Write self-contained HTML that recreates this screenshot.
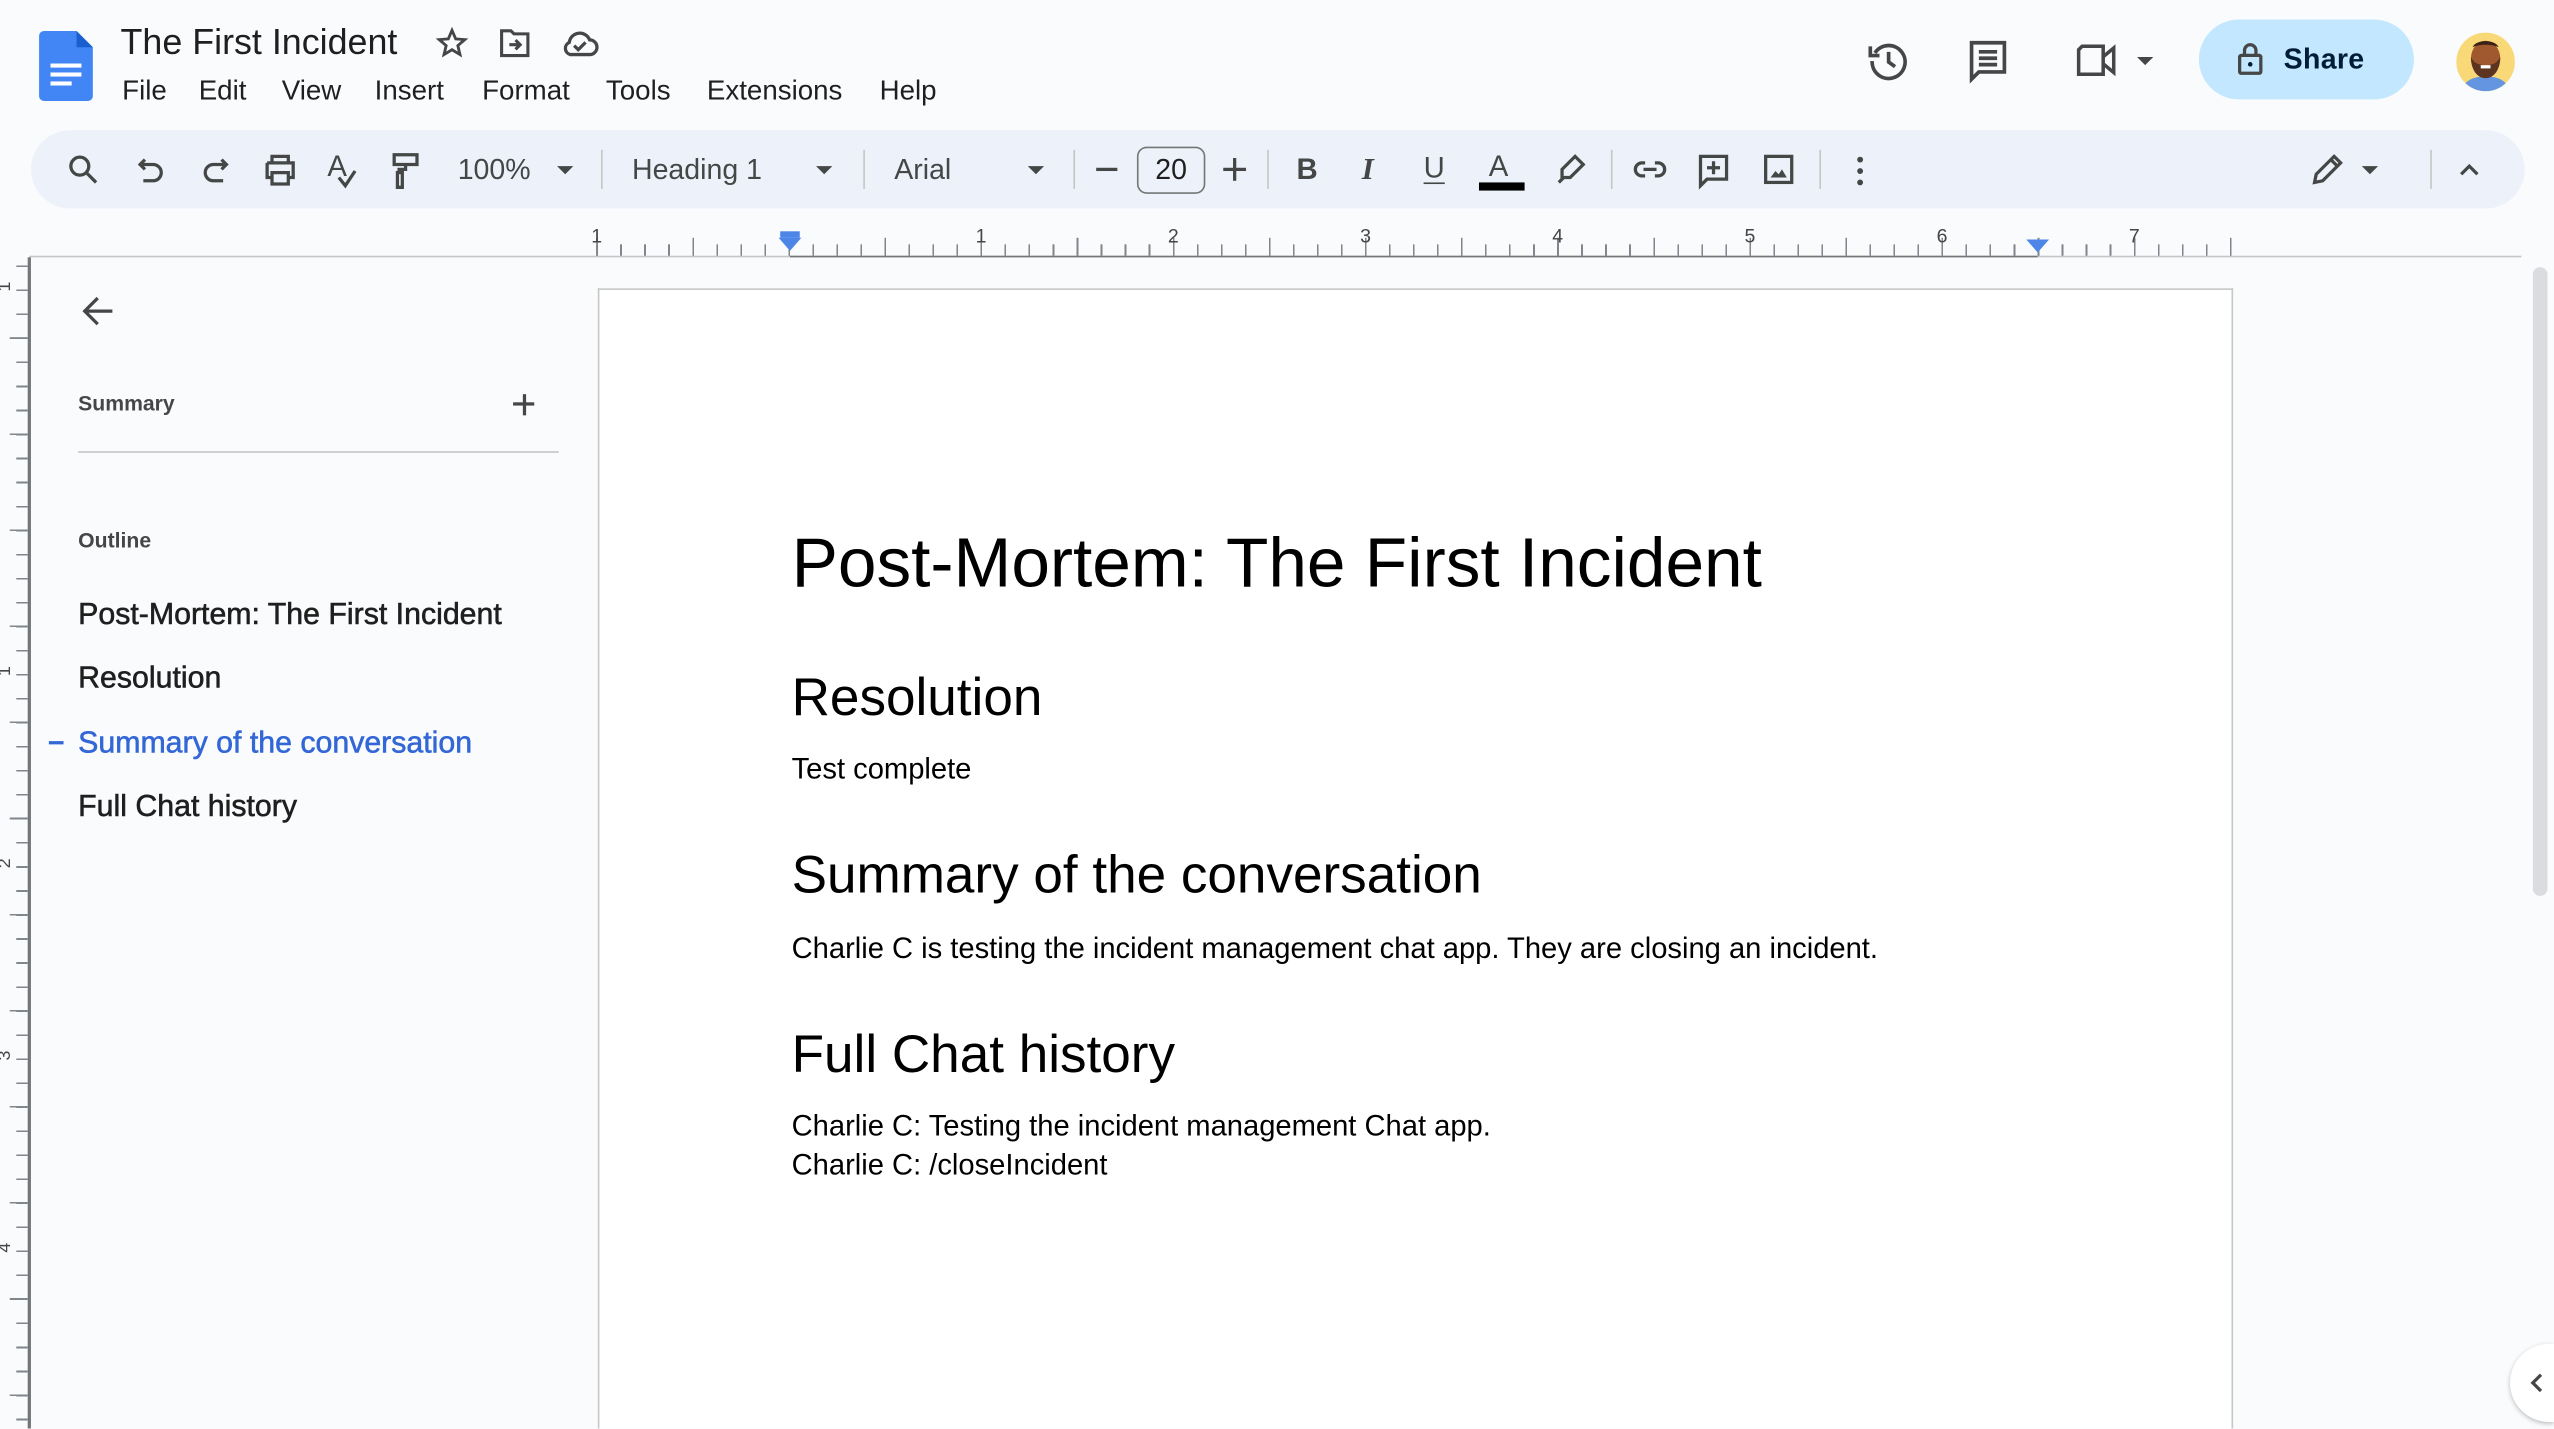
<!DOCTYPE html>
<html><head><meta charset="utf-8"><style>
*{margin:0;padding:0;box-sizing:border-box}
html,body{width:2554px;height:1429px;overflow:hidden;background:#f9fbfd}
#w{position:absolute;left:0;top:0;width:1568px;height:877px;overflow:hidden;transform:scale(1.62883);transform-origin:0 0;font-family:"Liberation Sans",Arial,sans-serif;color:#1f1f1f}
.a{position:absolute}
.m{font-size:17px;top:46px;color:#1f1f1f}
svg{position:absolute;overflow:visible}
.ic{stroke:#444746;fill:none;stroke-width:2}
.tb{font-size:17.5px;color:#444746;top:94px}
.sep{position:absolute;top:92px;width:1px;height:24px;background:#c4c7c5}
.tri{position:absolute;width:0;height:0;border-left:5px solid transparent;border-right:5px solid transparent;border-top:5px solid #444746}
.ol{font-size:18.6px;color:#1f1f1f;left:48px;-webkit-text-stroke:0.35px currentColor}
.doc{font-family:"Liberation Sans",Arial,sans-serif;color:#000;left:486px;white-space:nowrap}
</style></head><body><div id="w">
<svg style="left:24px;top:19px" width="33" height="43" viewBox="0 0 33 43"><path d="M3 0h20l10 10v30a3 3 0 0 1-3 3H3a3 3 0 0 1-3-3V3a3 3 0 0 1 3-3z" fill="#4285f4"/><path d="M23 0l10 10H23z" fill="#1a5fd0"/><rect x="7" y="20" width="19" height="2.5" fill="#fff"/><rect x="7" y="25.5" width="19" height="2.5" fill="#fff"/><rect x="7" y="31" width="13" height="2.5" fill="#fff"/></svg>
<div class="a" style="left:74px;top:13px;font-size:22px;color:#1f1f1f">The First Incident</div>
<svg style="left:267px;top:16px" width="21" height="21" viewBox="0 0 24 24"><path class="ic" d="M12 3l2.6 6 6.4.5-4.9 4.2 1.5 6.3L12 16.6 6.4 20l1.5-6.3L3 9.5l6.4-.5z" stroke-width="1.8"/></svg>
<svg style="left:306px;top:17px" width="21" height="19" viewBox="0 0 22 20"><path class="ic" d="M2 2h6l2 2h9v14H2z" stroke-width="1.8"/><path class="ic" d="M7 11h7m-3-3l3 3-3 3" stroke-width="1.6"/></svg>
<svg style="left:344px;top:17px" width="24" height="19" viewBox="0 0 24 18"><path class="ic" d="M6 16h12a4.5 4.5 0 0 0 0-9 6.5 6.5 0 0 0-12.5 1.5A4 4 0 0 0 6 16z" stroke-width="1.8"/><path class="ic" d="M8.5 10.5l2.5 2.5 4.5-4.5" stroke-width="1.6"/></svg>
<div class="a m" style="left:75px">File</div><div class="a m" style="left:122px">Edit</div><div class="a m" style="left:173px">View</div><div class="a m" style="left:230px">Insert</div><div class="a m" style="left:296px">Format</div><div class="a m" style="left:372px">Tools</div><div class="a m" style="left:434px">Extensions</div><div class="a m" style="left:540px">Help</div>
<svg style="left:1146px;top:24px" width="27" height="27" viewBox="0 0 24 24"><path class="ic" d="M4.5 7.5A9 9 0 1 1 3 12" stroke-width="2"/><path d="M2 4v5h5" class="ic" stroke-width="2"/><path class="ic" d="M12 7v5.5l3.5 2.5" stroke-width="2"/></svg>
<svg style="left:1207px;top:24px" width="27" height="28" viewBox="0 0 24 25"><path class="ic" d="M3 2h18v16H7l-4 4z" stroke-width="2"/><path class="ic" d="M7 7h10M7 10.5h10M7 14h10" stroke-width="2"/></svg>
<svg style="left:1274px;top:26px" width="28" height="22" viewBox="0 0 26 20"><path class="ic" d="M4 2h12v16H2V4z" stroke-width="2"/><path class="ic" d="M16 8l6-5v14l-6-5" stroke-width="2"/></svg>
<div class="tri" style="left:1312px;top:35px"></div>
<div class="a" style="left:1350px;top:12px;width:132px;height:49px;border-radius:25px;background:#c2e7ff"></div>
<svg style="left:1373px;top:26px" width="17" height="20" viewBox="0 0 16 20"><rect x="1.5" y="8" width="13" height="11" rx="1" class="ic" stroke="#001d35" stroke-width="2"/><path d="M4.5 8V5a3.5 3.5 0 0 1 7 0v3" class="ic" stroke="#001d35" stroke-width="2"/><circle cx="8" cy="13.5" r="1.4" fill="#001d35"/></svg>
<div class="a" style="left:1402px;top:26px;font-size:17.5px;color:#001d35;font-weight:bold;letter-spacing:.2px">Share</div>
<svg style="left:1508px;top:20px" width="36" height="36" viewBox="0 0 36 36"><defs><clipPath id="c"><circle cx="18" cy="18" r="18"/></clipPath></defs><g clip-path="url(#c)"><rect width="36" height="36" fill="#f9d877"/><path d="M3 36c2-7 8-9 15-9s13 2 15 9z" fill="#6495e0"/><ellipse cx="18" cy="16" rx="9" ry="11" fill="#a0582e"/><path d="M9 15c0 8 4 13 9 13s9-5 9-13c-2 4-5 5-9 5s-7-1-9-5z" fill="#5c3420"/><path d="M10 9c2-5 14-5 16 0-4-2-12-2-16 0z" fill="#3a2216"/><rect x="15" y="20" width="6" height="2" fill="#fff"/></g></svg>
<div class="a" style="left:19px;top:80px;width:1531px;height:48px;border-radius:24px;background:#edf2fa"></div>
<svg style="left:41px;top:94px" width="20" height="20" viewBox="0 0 20 20"><circle cx="8" cy="8" r="5.5" class="ic"/><path d="M12 12l6 6" class="ic"/></svg>
<svg style="left:84px;top:95px" width="18" height="20" viewBox="0 0 18 20"><path class="ic" d="M5 3L2 6l3 3M2 6h8a5 5 0 0 1 0 10H4"/></svg>
<svg style="left:123px;top:95px" width="18" height="20" viewBox="0 0 18 20"><path class="ic" d="M13 3l3 3-3 3M16 6H8a5 5 0 0 0 0 10h6"/></svg>
<svg style="left:161px;top:94px" width="22" height="20" viewBox="0 0 22 20"><path class="ic" d="M6 6V2h10v4M3 6h16v9h-3M3 6v9h3M6 12h10v7H6z"/></svg>
<div class="a" style="left:201px;top:92px;font-size:18px;color:#444746">A</div>
<svg style="left:206px;top:104px" width="14" height="12" viewBox="0 0 14 12"><path class="ic" d="M2 5l4 5 6-9"/></svg>
<svg style="left:240px;top:93px" width="20" height="24" viewBox="0 0 20 24"><path class="ic" d="M2 2h14v6H2zM9 8v3h-4v2M4 13h3v9H4z"/></svg>
<div class="a tb" style="left:281px">100%</div><div class="tri" style="left:342px;top:102px"></div>
<div class="sep" style="left:369px"></div>
<div class="a tb" style="left:388px">Heading 1</div><div class="tri" style="left:501px;top:102px"></div>
<div class="sep" style="left:530px"></div>
<div class="a tb" style="left:549px">Arial</div><div class="tri" style="left:631px;top:102px"></div>
<div class="sep" style="left:659px"></div>
<div class="a" style="left:673px;top:103px;width:13px;height:2px;background:#444746"></div>
<div class="a" style="left:698px;top:90px;width:42px;height:29px;border:1.5px solid #747775;border-radius:6px;font-size:17.5px;color:#1f1f1f;text-align:center;line-height:26px">20</div>
<div class="a" style="left:751px;top:103px;width:14px;height:2px;background:#444746"></div><div class="a" style="left:757px;top:97px;width:2px;height:14px;background:#444746"></div>
<div class="sep" style="left:778px"></div>
<div class="a" style="left:796px;top:94px;font-size:18px;font-weight:bold;color:#444746">B</div>
<div class="a" style="left:836px;top:94px;font-size:19px;font-style:italic;font-family:'Liberation Serif',serif;color:#444746;font-weight:bold">I</div>
<div class="a" style="left:874px;top:93px;font-size:18px;color:#444746;text-decoration:underline;text-underline-offset:3px">U</div>
<div class="a" style="left:914px;top:92px;font-size:18px;color:#444746">A</div><div class="a" style="left:908px;top:112px;width:28px;height:5px;background:#000"></div>
<svg style="left:954px;top:94px" width="20" height="20" viewBox="0 0 20 20"><path class="ic" d="M13 2l5 5-8 8H5v-5zM3 18l3-3"/></svg>
<div class="sep" style="left:989px"></div>
<svg style="left:1002px;top:97px" width="22" height="14" viewBox="0 0 22 14"><path class="ic" d="M8 3H6a4 4 0 0 0 0 8h2M14 3h2a4 4 0 0 1 0 8h-2M7 7h8"/></svg>
<svg style="left:1042px;top:94px" width="20" height="23" viewBox="0 0 20 23"><path class="ic" d="M2 2h16v14H6l-4 4zM10 5v8M6 9h8"/></svg>
<svg style="left:1082px;top:94px" width="20" height="20" viewBox="0 0 20 20"><rect x="2" y="2" width="16" height="16" class="ic"/><path d="M5 15l3-4 2 2 2-3 3 5z" fill="#444746"/></svg>
<div class="sep" style="left:1117px"></div>
<svg style="left:1138px;top:95px" width="8" height="20" viewBox="0 0 8 20"><circle cx="4" cy="3" r="1.8" fill="#444746"/><circle cx="4" cy="10" r="1.8" fill="#444746"/><circle cx="4" cy="17" r="1.8" fill="#444746"/></svg>
<svg style="left:1418px;top:93px" width="22" height="22" viewBox="0 0 22 22"><path class="ic" d="M15 3l4 4L8 18l-5 1 1-5zM13 5l4 4"/></svg>
<div class="tri" style="left:1450px;top:102px"></div>
<div class="sep" style="left:1492px"></div>
<svg style="left:1509px;top:99px" width="14" height="10" viewBox="0 0 14 10"><path class="ic" d="M2 8l5-5 5 5"/></svg>
<div class="a" style="left:18px;top:157px;width:1530px;height:1px;background:#c4c7c5"></div>
<div class="a" style="left:485px;top:157px;width:766px;height:1px;background:#747775"></div>
<div class="a" style="left:366px;top:150px;width:1004px;height:7px;background:repeating-linear-gradient(90deg,#80868b 0 1px,transparent 1px 14.75px)"></div>
<div class="a" style="left:366px;top:146px;width:1004px;height:11px;background:repeating-linear-gradient(90deg,#80868b 0 1px,transparent 1px 59px)"></div>
<div class="a" style="left:0;top:138px;width:1568px;height:14px;font-size:12px;color:#444746">
<span class="a" style="left:363px">1</span><span class="a" style="left:599px">1</span><span class="a" style="left:717px">2</span><span class="a" style="left:835px">3</span><span class="a" style="left:953px">4</span><span class="a" style="left:1071px">5</span><span class="a" style="left:1189px">6</span><span class="a" style="left:1307px">7</span></div>
<div class="a" style="left:479px;top:142px;width:12px;height:4px;background:#4e86e8"></div>
<div class="tri" style="left:478px;top:146px;border-left-width:7px;border-right-width:7px;border-top:8px solid #4e86e8"></div>
<div class="tri" style="left:1244px;top:147px;border-left-width:7px;border-right-width:7px;border-top:8px solid #4e86e8"></div>
<div class="a" style="left:17px;top:158px;width:1.5px;height:719px;background:#747775"></div>
<div class="a" style="left:10px;top:163px;width:7px;height:714px;background:repeating-linear-gradient(180deg,#80868b 0 1px,transparent 1px 14.75px)"></div>
<div class="a" style="left:6px;top:207px;width:11px;height:670px;background:repeating-linear-gradient(180deg,#80868b 0 1px,transparent 1px 59px)"></div>
<div class="a" style="left:0;top:170px;font-size:11px;color:#444746;transform:rotate(-90deg)">1</div>
<div class="a" style="left:0;top:406px;font-size:11px;color:#444746;transform:rotate(-90deg)">1</div>
<div class="a" style="left:0;top:524px;font-size:11px;color:#444746;transform:rotate(-90deg)">2</div>
<div class="a" style="left:0;top:642px;font-size:11px;color:#444746;transform:rotate(-90deg)">3</div>
<div class="a" style="left:0;top:760px;font-size:11px;color:#444746;transform:rotate(-90deg)">4</div>
<svg style="left:50px;top:181px" width="21" height="20" viewBox="0 0 21 20"><path class="ic" d="M19 10H3M10 2l-8 8 8 8" stroke-width="2"/></svg>
<div class="a" style="left:48px;top:240px;font-size:13px;font-weight:bold;color:#444746">Summary</div>
<div class="a" style="left:315px;top:247px;width:13px;height:2px;background:#444746"></div><div class="a" style="left:320.5px;top:241.5px;width:2px;height:13px;background:#444746"></div>
<div class="a" style="left:48px;top:277px;width:295px;height:1px;background:#c4c7c5"></div>
<div class="a" style="left:48px;top:324px;font-size:13px;font-weight:bold;color:#444746">Outline</div>
<div class="a ol" style="top:366px">Post-Mortem: The First Incident</div>
<div class="a ol" style="top:405px">Resolution</div>
<div class="a" style="left:30px;top:455px;width:9px;height:2px;background:#3367d6"></div>
<div class="a ol" style="top:445px;color:#3367d6">Summary of the conversation</div>
<div class="a ol" style="top:484px">Full Chat history</div>
<div class="a" style="left:367px;top:177px;width:1004px;height:700px;background:#fff;border:1px solid #c7c7c7;border-bottom:none"></div>
<div class="a doc" style="top:322px;font-size:42.6px">Post-Mortem: The First Incident</div>
<div class="a doc" style="top:409px;font-size:32.6px">Resolution</div>
<div class="a doc" style="top:462px;font-size:17.9px">Test complete</div>
<div class="a doc" style="top:518px;font-size:32.6px">Summary of the conversation</div>
<div class="a doc" style="top:572px;font-size:17.9px">Charlie C is testing the incident management chat app. They are closing an incident.</div>
<div class="a doc" style="top:628px;font-size:32.6px">Full Chat history</div>
<div class="a doc" style="top:681px;font-size:17.9px">Charlie C: Testing the incident management Chat app.</div>
<div class="a doc" style="top:705px;font-size:17.9px">Charlie C: /closeIncident</div>
<div class="a" style="left:1555px;top:164px;width:9px;height:386px;border-radius:5px;background:#dadce0"></div>
<div class="a" style="left:1541px;top:825px;width:27px;height:48px;border-radius:24px 0 0 24px;background:#fff;box-shadow:0 1px 3px rgba(0,0,0,.25)"></div>
<svg style="left:1553px;top:843px" width="8" height="12" viewBox="0 0 8 12"><path class="ic" d="M7 1L2 6l5 5"/></svg>
</div></body></html>
